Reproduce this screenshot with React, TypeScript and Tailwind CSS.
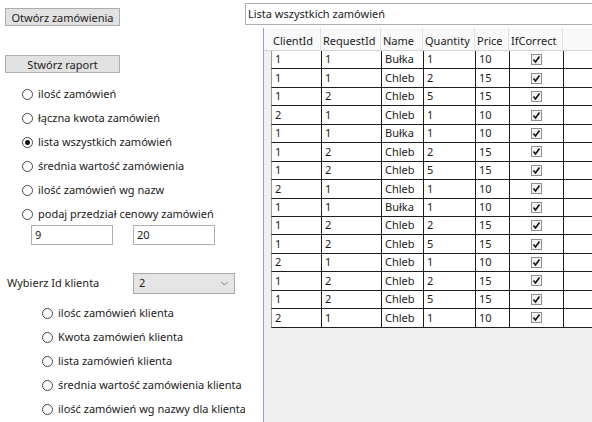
const rows = [
  [1, 1, 'Bułka', 1, 10],
  [1, 1, 'Chleb', 2, 15],
  [1, 2, 'Chleb', 5, 15],
  [2, 1, 'Chleb', 1, 10],
  [1, 1, 'Bułka', 1, 10],
  [1, 2, 'Chleb', 2, 15],
  [1, 2, 'Chleb', 5, 15],
  [2, 1, 'Chleb', 1, 10],
  [1, 1, 'Bułka', 1, 10],
  [1, 2, 'Chleb', 2, 15],
  [1, 2, 'Chleb', 5, 15],
  [2, 1, 'Chleb', 1, 10],
  [1, 2, 'Chleb', 2, 15],
  [1, 2, 'Chleb', 5, 15],
  [2, 1, 'Chleb', 1, 10],
];

const reportOptions = [
  'ilość zamówień',
  'łączna kwota zamówień',
  'lista wszystkich zamówień',
  'średnia wartość zamówienia',
  'ilość zamówień wg nazw',
  'podaj przedział cenowy zamówień',
];

const clientOptions = [
  'ilośc zamówień klienta',
  'Kwota zamówień klienta',
  'lista zamówień klienta',
  'średnia wartość zamówienia klienta',
  'ilość zamówień wg nazwy dla klienta',
];

const Radio = ({ label, checked }: { label: string; checked?: boolean }) => (
  <div className="flex items-center h-[24px] whitespace-nowrap">
    <span className="flex items-center justify-center w-[11px] h-[11px] rounded-full border border-[#444] bg-white shrink-0">
      {checked && <span className="w-[5px] h-[5px] rounded-full bg-[#111]" />}
    </span>
    <span className="ml-[5px]">{label}</span>
  </div>
);

const Check = () => (
  <span className="flex items-center justify-center w-[11px] h-[11px] border border-[#8f8f8f] bg-[#f4f4f4]">
    <svg width="9" height="9" viewBox="0 0 9 9">
      <path d="M1.5 4.5 L3.5 7 L7.5 1.5" fill="none" stroke="#111" strokeWidth="1.6" />
    </svg>
  </span>
);

const cols = [
  { name: 'ClientId', w: 'w-[50px]' },
  { name: 'RequestId', w: 'w-[60px]' },
  { name: 'Name', w: 'w-[42px]' },
  { name: 'Quantity', w: 'w-[52px]' },
  { name: 'Price', w: 'w-[34px]' },
  { name: 'IfCorrect', w: 'w-[54px]' },
];

export default function App() {
  return (
    <div
      className="w-[592px] h-[422px] bg-white flex overflow-hidden text-[11px] text-[#1b1b1b]"
      style={{ fontFamily: '"Noto Sans", "Open Sans", sans-serif' }}>
      {/* left pane */}
      <div className="w-[245px] shrink-0 overflow-hidden flex flex-col">
        <div className="pt-[8px] pl-[5px]">
          <button className="w-[115px] h-[18px] bg-[#e1e1e1] border border-[#adadad] leading-none">
            Otwórz zamówienia
          </button>
        </div>
        <div className="mt-[29px] pl-[5px]">
          <button className="w-[115px] h-[18px] bg-[#e1e1e1] border border-[#adadad] leading-none">
            Stwórz raport
          </button>
        </div>
        <div className="mt-[9px] pl-[22px]">
          {reportOptions.map((o, i) => (
            <Radio key={o} label={o} checked={i === 2} />
          ))}
        </div>
        <div className="flex -mt-px pl-[31px] gap-[20px]">
          <div className="w-[82px] h-[20px] border border-[#abadb3] pl-[3px] leading-[18px]">9</div>
          <div className="w-[82px] h-[20px] border border-[#abadb3] pl-[3px] leading-[18px]">20</div>
        </div>
        <div className="flex items-center mt-[28px] pl-[7px]">
          <span className="w-[126px]">Wybierz Id klienta</span>
          <div className="w-[102px] h-[21px] bg-[#e5e5e5] border border-[#acacac] flex items-center justify-between pl-[5px] pr-[6px]">
            <span>2</span>
            <svg width="7" height="5" viewBox="0 0 7 5">
              <path d="M0.5 1 L3.5 4 L6.5 1" fill="none" stroke="#7a7a7a" strokeWidth="1" />
            </svg>
          </div>
        </div>
        <div className="mt-[7px] pl-[42px]">
          {clientOptions.map(o => (
            <Radio key={o} label={o} />
          ))}
        </div>
      </div>

      {/* right pane */}
      <div className="flex-1 flex flex-col min-w-0">
        <div className="mt-[3px] h-[22px] w-[360px] border border-[#abadb3] pl-[2px] leading-[20px] whitespace-nowrap">
          Lista wszystkich zamówień
        </div>
        <div className="mt-[3px] ml-[18px] flex-1 border-l border-[#8ca4c4] bg-[#f0f0f0] flex flex-col">
          <div className="flex h-[23px] bg-[#f9f9f9] border-b border-[#d5d5d5]">
            <div className="w-[7px] shrink-0" />
            {cols.map(c => (
              <div
                key={c.name}
                className={`${c.w} shrink-0 border-r border-[#dde2e8] pl-[2px] pt-[5px] whitespace-nowrap`}>
                {c.name}
              </div>
            ))}
            <div className="flex-1" />
          </div>
          {rows.map((r, i) => (
            <div key={i} className="flex h-[18.45px] bg-white border-b border-[#1e1e1e] ml-[7px] border-l border-l-[#9a9a9a]">
              {r.map((v, j) => (
                <div
                  key={j}
                  className={`${cols[j].w} shrink-0 border-r border-[#1e1e1e] pl-[3px] flex items-center`}>
                  {v}
                </div>
              ))}
              <div className="w-[54px] shrink-0 border-r border-[#1e1e1e] flex items-center justify-center">
                <Check />
              </div>
              <div className="flex-1" />
            </div>
          ))}
        </div>
      </div>
    </div>
  );
}
